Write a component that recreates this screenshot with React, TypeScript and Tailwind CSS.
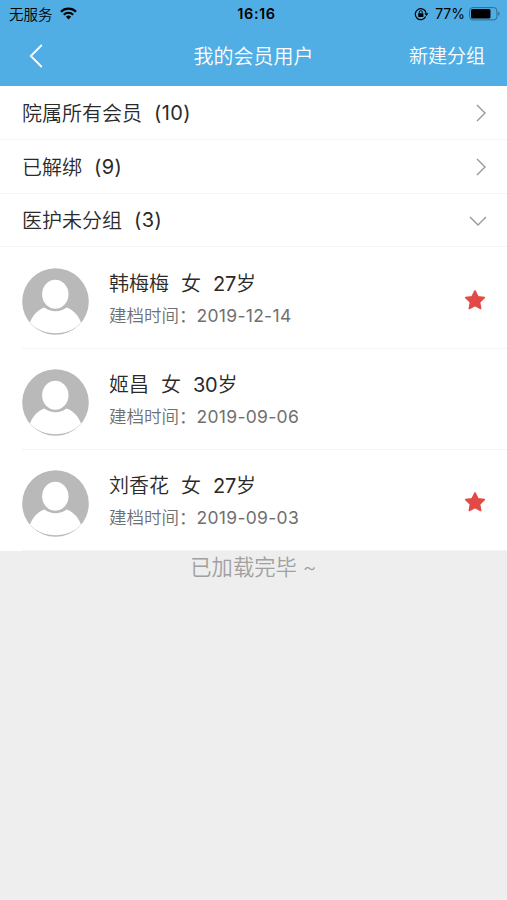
import { useState } from 'react'

interface Member {
  name: string
  gender: string
  age: number
  created: string
  starred: boolean
}

interface Group {
  title: string
  count: number
  members: Member[]
}

const groups: Group[] = [
  { title: '院属所有会员', count: 10, members: [] },
  { title: '已解绑', count: 9, members: [] },
  {
    title: '医护未分组',
    count: 3,
    members: [
      { name: '韩梅梅', gender: '女', age: 27, created: '2019-12-14', starred: true },
      { name: '姬昌', gender: '女', age: 30, created: '2019-09-06', starred: false },
      { name: '刘香花', gender: '女', age: 27, created: '2019-09-03', starred: true },
    ],
  },
]

function StatusBar() {
  return (
    <div className="flex h-7 items-center justify-between px-[7px] text-black">
      <div className="flex flex-1 items-center gap-[7px]">
        <span className="ml-[2px] pt-px text-[14.5px] font-[350] leading-5">无服务</span>
        <svg className="-mt-px" width="17" height="13" viewBox="0 0 18 13" fill="none" stroke="currentColor">
          <path d="M1 4.6a11.3 11.3 0 0 1 16 0" strokeWidth="2.4" />
          <path d="M4 7.8a7.1 7.1 0 0 1 10 0" strokeWidth="2.2" />
          <path d="M9 12.8 6.2 10a4 4 0 0 1 5.6 0z" fill="currentColor" stroke="none" />
        </svg>
      </div>
      <span className="ml-[6px] text-[14.5px] font-semibold leading-5 tracking-[0.6px]">16:16</span>
      <div className="flex flex-1 items-center justify-end">
        <svg className="-mt-px" width="15" height="14" viewBox="0 0 15 14" fill="none" stroke="currentColor">
          <path d="M11.7 9.6A5.5 5.5 0 1 1 12.1 5.8" strokeWidth="1.2" />
          <path d="M10.3 6.2h4.2l-2.1 2.7z" fill="currentColor" stroke="none" />
          <rect x="4.2" y="6.2" width="5.2" height="3.8" rx="0.5" fill="currentColor" stroke="none" />
          <path d="M5.3 6.5V5.2a1.5 1.5 0 0 1 3 0v1.3" strokeWidth="1" />
        </svg>
        <span className="ml-[6px] text-[14px] leading-5">77%</span>
        <svg className="-mr-px -mt-px ml-[4px]" width="32" height="14" viewBox="0 0 32 14">
          <rect x="0.6" y="0.6" width="27.3" height="12.3" rx="3.2" fill="none" stroke="#2f6b8f" />
          <rect x="2" y="2" width="19.5" height="9.5" rx="1.5" fill="#000" />
          <path d="M29.2 4.8c1.8.4 1.8 3.6 0 4z" fill="#2f6b8f" />
        </svg>
      </div>
    </div>
  )
}

function NavBar() {
  return (
    <div className="flex h-[58px] items-center px-[22px] text-white">
      <div className="flex flex-1">
        <button className="-mt-[2px] ml-[7px]" aria-label="返回">
          <svg width="15" height="24" viewBox="0 0 15 24" fill="none" stroke="currentColor" strokeWidth="1.8">
            <path d="M12.8 1 1.8 12l11 11" />
          </svg>
        </button>
      </div>
      <h1 className="text-[20px] font-[350] leading-7">我的会员用户</h1>
      <div className="flex flex-1 justify-end">
        <button className="text-[19px] font-[350] leading-7">新建分组</button>
      </div>
    </div>
  )
}

function Avatar() {
  return (
    <svg className="shrink-0" width="67" height="67" viewBox="0 0 67 67">
      <circle cx="33.5" cy="33.5" r="33.3" fill="#b9b9b9" />
      <path d="M8 54.5C10.500 48 15 42 22.500 39.500Q27.500 43.300 33.500 43.300T44.500 39.500C52 42 56.500 48 59 54.500C53 61.500 43.500 65.300 33.500 65.300S14 61.500 8 54.500z" fill="#fff" />
      <ellipse cx="33.300" cy="26.300" rx="13.200" ry="14.500" fill="#fff" />
    </svg>
  )
}

function Star() {
  return (
    <svg className="-mt-[3px]" width="22" height="22" viewBox="0 0 22 22" fill="#e24a46" stroke="#e24a46" strokeWidth="1.5" strokeLinejoin="round">
      <path d="m11 1.800 2.900 5.900 6.400.9-4.700 4.600 1.100 6.400-5.700-3-5.700 3 1.100-6.400L1.700 8.600l6.400-.9z" />
    </svg>
  )
}

function MemberRow({ member }: { member: Member }) {
  return (
    <div className="ml-[22px] flex h-[101.300px] items-center border-b border-[#f4f4f4] pr-[21px] pt-[7px]">
      <Avatar />
      <div className="ml-5 flex-1 pb-[3px]">
        <div className="flex gap-3 text-[20px] font-[350] leading-8 text-[#2a2a2a]">
          <span>{member.name}</span>
          <span>{member.gender}</span>
          <span>
            <span className="font-normal tracking-[-0.300px]">{member.age}</span>岁
          </span>
        </div>
        <div className="text-[17.500px] font-[350] leading-8 text-[#707070]">
          建档时间：<span className="font-normal tracking-[0.300px]">{member.created}</span>
        </div>
      </div>
      {member.starred && <Star />}
    </div>
  )
}

export default function App() {
  const [openGroup, setOpenGroup] = useState('医护未分组')

  return (
    <div className="min-h-screen bg-[#eee] font-['Inter','Noto_Sans_CJK_SC',sans-serif]">
      <header className="bg-[#50aee5]">
        <StatusBar />
        <NavBar />
      </header>

      <main>
        {groups.map((group) => {
          const open = group.title === openGroup
          return (
            <section key={group.title} className="bg-white">
              <button
                onClick={() => setOpenGroup(open ? '' : group.title)}
                className="flex h-[53.800px] w-full items-center justify-between border-b border-[#f4f4f4] pl-[22px] pr-5 pt-[2px] text-[20px] font-[350] text-[#2a2a2a]"
              >
                <span className="flex gap-3 pt-px">
                  <span>{group.title}</span>
                  <span className="-mt-px font-normal tracking-[0.400px]">({group.count})</span>
                </span>
                <svg
                  className={open ? 'rotate-90' : '-mr-[3px]'}
                  width="18"
                  height="18"
                  viewBox="0 0 18 18"
                  fill="none"
                  stroke="#999"
                  strokeWidth="1.400"
                >
                  <path d="m5 1 8 8-8 8" />
                </svg>
              </button>
              {open && group.members.map((m) => <MemberRow key={m.name} member={m} />)}
            </section>
          )
        })}
        <p className="text-center text-[21.300px] font-[350] leading-8 text-[#a0a0a0]">已加载完毕 ~</p>
      </main>
    </div>
  )
}
